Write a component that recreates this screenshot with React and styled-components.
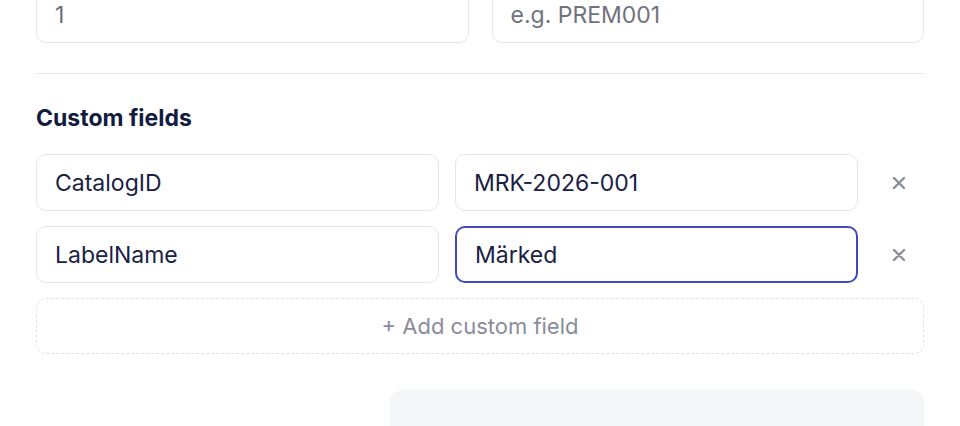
import styled, { createGlobalStyle } from 'styled-components';

const GlobalStyle = createGlobalStyle`
  html, body {
    margin: 0;
    padding: 0;
    background: #ffffff;
    overflow: hidden;
  }
  body {
    font-family: Inter, "Noto Sans", "Liberation Sans", sans-serif;
    color: #1a2145;
  }
`;

const Page = styled.div`
  width: 960px;
  height: 426px;
  overflow: hidden;
`;

const Form = styled.div`
  margin-top: -14px;
  padding: 0 36px;
  display: flex;
  flex-direction: column;
`;

const TwoCols = styled.div`
  display: grid;
  grid-template-columns: 1fr 1fr;
  gap: 23px;
`;

const Input = styled.input`
  box-sizing: border-box;
  width: 100%;
  height: 57px;
  padding: 0 18px;
  border: ${(p) => (p.$focused ? '2px solid #4249bf' : '1.5px solid #e4e6ec')};
  border-radius: 10px;
  background: #fff;
  font-family: Inter, "Noto Sans", "Liberation Sans", sans-serif;
  font-size: 23px;
  color: ${(p) => (p.$muted ? '#6b6f7a' : '#1a2145')};
  outline: none;

  &::placeholder {
    color: #70737c;
  }
`;

const Divider = styled.hr`
  border: 0;
  border-top: 1.5px solid #e6e7eb;
  margin: 30px 0 0;
`;

const Heading = styled.h3`
  margin: 30px 0 22px;
  font-size: 23px;
  font-weight: 700;
  color: #121a40;
  line-height: 28px;
`;

const Rows = styled.div`
  display: flex;
  flex-direction: column;
  gap: 15px;
`;

const FieldRow = styled.div`
  display: grid;
  grid-template-columns: 1fr 1fr 50px;
  gap: 16px;
  align-items: center;
`;

const RemoveButton = styled.button`
  border: 0;
  background: none;
  padding: 0;
  height: 40px;
  display: flex;
  align-items: center;
  justify-content: center;
  color: #8a8d96;
  cursor: pointer;
`;

const AddButton = styled.button`
  box-sizing: border-box;
  height: 56px;
  width: 100%;
  border: 1.5px dashed #dfe1e6;
  border-radius: 10px;
  background: #fff;
  font-family: Inter, "Noto Sans", "Liberation Sans", sans-serif;
  font-size: 22px;
  color: #8a8c9b;
  cursor: pointer;
`;

const Footer = styled.div`
  display: flex;
  justify-content: flex-end;
  margin-top: 36px;
`;

const Summary = styled.div`
  width: 534px;
  height: 80px;
  border-radius: 12px;
  background: #f5f6f8;
  padding: 32px 32px 0;
  box-sizing: border-box;
  text-align: right;
  font-size: 22px;
  color: #3a3f52;
`;

const CloseIcon = () => (
  <svg width="14" height="14" viewBox="0 0 14 14" fill="none">
    <path d="M2 2l10 10M12 2L2 12" stroke="currentColor" strokeWidth="2.4" strokeLinecap="round" />
  </svg>
);

const fields = [
  { key: 'CatalogID', value: 'MRK-2026-001' },
  { key: 'LabelName', value: 'Märked', focused: true },
];

export default function App() {
  return (
    <Page>
      <GlobalStyle />
      <Form>
        <TwoCols>
          <Input defaultValue="1" $muted />
          <Input placeholder="e.g. PREM001" />
        </TwoCols>

        <Divider />

        <Heading>Custom fields</Heading>

        <Rows>
          {fields.map((f) => (
            <FieldRow key={f.key}>
              <Input defaultValue={f.key} />
              <Input defaultValue={f.value} $focused={f.focused} />
              <RemoveButton aria-label="Remove field">
                <CloseIcon />
              </RemoveButton>
            </FieldRow>
          ))}
          <AddButton>+ Add custom field</AddButton>
        </Rows>

        <Footer>
          <Summary>Total custom fields: 2</Summary>
        </Footer>
      </Form>
    </Page>
  );
}
